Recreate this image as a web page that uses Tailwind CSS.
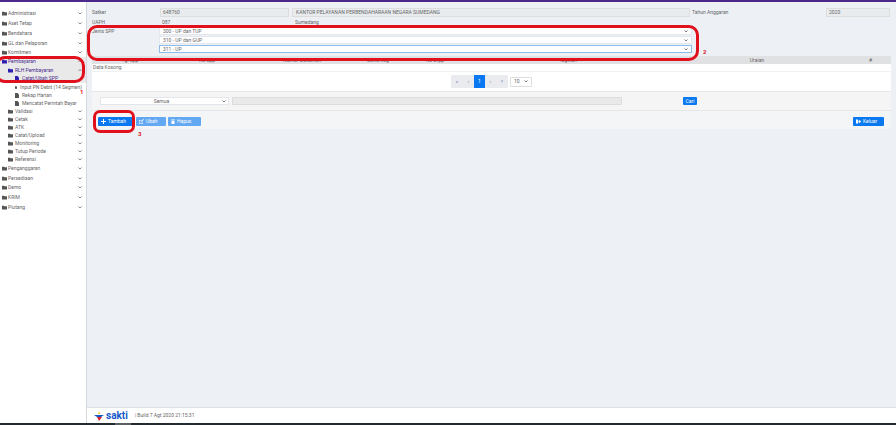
<!DOCTYPE html>
<html lang="id">
<head>
  <meta charset="UTF-8" />
  <title>SAKTI</title>
  <script src="https://cdn.jsdelivr.net/npm/@tailwindcss/browser@4"></script>
</head>
<body class="h-[425px] w-[896px] overflow-hidden bg-[#edf1f6] font-['Roboto',sans-serif] text-[5px] leading-none text-[#666]">
  <div class="relative flex h-[425px] flex-col">
    <div class="h-[2px] bg-[#4b2a8c]"></div>

    <div class="flex min-h-0 flex-1">
      <!-- Sidebar -->
      <aside class="flex w-[87px] shrink-0 flex-col whitespace-nowrap border-r border-[#d5d8dc] bg-white pt-[6px]">
        <div class="flex h-[10px] items-center pl-[2px] pr-[4px]"><svg class="mr-[1px] h-[5px] w-[5px] fill-[#555]" viewBox="0 0 12 10"><path d="M0 1h5l1 1h6v8H0z"/></svg><span class="flex-1">Administrasi</span><svg class="h-[3px] w-[4px] stroke-[#666]" viewBox="0 0 8 6" fill="none" stroke-width="1.5"><path d="M1 1l3 3 3-3"/></svg></div>
        <div class="flex h-[10px] items-center pl-[2px] pr-[4px]"><svg class="mr-[1px] h-[5px] w-[5px] fill-[#555]" viewBox="0 0 12 10"><path d="M0 1h5l1 1h6v8H0z"/></svg><span class="flex-1">Aset Tetap</span><svg class="h-[3px] w-[4px] stroke-[#666]" viewBox="0 0 8 6" fill="none" stroke-width="1.5"><path d="M1 1l3 3 3-3"/></svg></div>
        <div class="flex h-[10px] items-center pl-[2px] pr-[4px]"><svg class="mr-[1px] h-[5px] w-[5px] fill-[#555]" viewBox="0 0 12 10"><path d="M0 1h5l1 1h6v8H0z"/></svg><span class="flex-1">Bendahara</span><svg class="h-[3px] w-[4px] stroke-[#666]" viewBox="0 0 8 6" fill="none" stroke-width="1.5"><path d="M1 1l3 3 3-3"/></svg></div>
        <div class="flex h-[10px] items-center pl-[2px] pr-[4px]"><svg class="mr-[1px] h-[5px] w-[5px] fill-[#555]" viewBox="0 0 12 10"><path d="M0 1h5l1 1h6v8H0z"/></svg><span class="flex-1">GL dan Pelaporan</span><svg class="h-[3px] w-[4px] stroke-[#666]" viewBox="0 0 8 6" fill="none" stroke-width="1.5"><path d="M1 1l3 3 3-3"/></svg></div>
        <div class="flex h-[9px] items-center pl-[2px] pr-[4px]"><svg class="mr-[1px] h-[5px] w-[5px] fill-[#555]" viewBox="0 0 12 10"><path d="M0 1h5l1 1h6v8H0z"/></svg><span class="flex-1">Komitmen</span><svg class="h-[3px] w-[4px] stroke-[#666]" viewBox="0 0 8 6" fill="none" stroke-width="1.5"><path d="M1 1l3 3 3-3"/></svg></div>

        <div class="bg-[#e9e9e9] pb-[1px]">
          <div class="flex h-[9px] items-center pl-[2px] pr-[4px] text-[#4b2a8c]"><svg class="mr-[1px] h-[5px] w-[5px] fill-[#2f1fb0]" viewBox="0 0 12 10"><path d="M0 1h5l1 1h6v8H0z"/></svg><span class="flex-1">Pembayaran</span><svg class="h-[3px] w-[4px] stroke-[#666]" viewBox="0 0 8 6" fill="none" stroke-width="1.5"><path d="M1 4l3-3 3 3"/></svg></div>
          <div class="flex h-[8px] items-center pl-[8px] pr-[4px] text-[#4b2a8c]"><svg class="mr-[2px] h-[5px] w-[5px] fill-[#2f1fb0]" viewBox="0 0 12 10"><path d="M0 1h5l1 1h6v8H0z"/></svg><span class="flex-1">RLH Pembayaran</span><svg class="h-[3px] w-[4px] stroke-[#666]" viewBox="0 0 8 6" fill="none" stroke-width="1.5"><path d="M1 4l3-3 3 3"/></svg></div>
          <div class="flex h-[8px] items-center pl-[15px] pr-[4px] text-[#4b2a8c]"><svg class="mr-[3px] h-[5px] w-[4px] fill-[#2f1fb0]" viewBox="0 0 8 10"><path d="M0 0h5l3 3v7H0z"/></svg><span>Catat/Ubah SPP</span></div>
        </div>

        <div class="flex h-[8px] items-center pl-[15px] pr-[4px]"><svg class="mr-[3px] h-[5px] w-[4px] fill-[#555]" viewBox="0 0 8 10"><path d="M0 0h5l3 3v7H0z"/></svg><span>Input PN Debit (14 Segmen)</span></div>
        <div class="flex h-[8px] items-center pl-[15px] pr-[4px]"><svg class="mr-[3px] h-[5px] w-[4px] fill-[#555]" viewBox="0 0 8 10"><path d="M0 0h5l3 3v7H0z"/></svg><span>Rekap Harian</span></div>
        <div class="flex h-[8px] items-center pl-[15px] pr-[4px]"><svg class="mr-[3px] h-[5px] w-[4px] fill-[#555]" viewBox="0 0 8 10"><path d="M0 0h5l3 3v7H0z"/></svg><span>Mencatat Perintah Bayar</span></div>

        <div class="flex h-[8px] items-center pl-[8px] pr-[4px]"><svg class="mr-[2px] h-[5px] w-[5px] fill-[#555]" viewBox="0 0 12 10"><path d="M0 1h5l1 1h6v8H0z"/></svg><span class="flex-1">Validasi</span><svg class="h-[3px] w-[4px] stroke-[#666]" viewBox="0 0 8 6" fill="none" stroke-width="1.5"><path d="M1 1l3 3 3-3"/></svg></div>
        <div class="flex h-[8px] items-center pl-[8px] pr-[4px]"><svg class="mr-[2px] h-[5px] w-[5px] fill-[#555]" viewBox="0 0 12 10"><path d="M0 1h5l1 1h6v8H0z"/></svg><span class="flex-1">Cetak</span><svg class="h-[3px] w-[4px] stroke-[#666]" viewBox="0 0 8 6" fill="none" stroke-width="1.5"><path d="M1 1l3 3 3-3"/></svg></div>
        <div class="flex h-[8px] items-center pl-[8px] pr-[4px]"><svg class="mr-[2px] h-[5px] w-[5px] fill-[#555]" viewBox="0 0 12 10"><path d="M0 1h5l1 1h6v8H0z"/></svg><span class="flex-1">ATK</span><svg class="h-[3px] w-[4px] stroke-[#666]" viewBox="0 0 8 6" fill="none" stroke-width="1.5"><path d="M1 1l3 3 3-3"/></svg></div>
        <div class="flex h-[8px] items-center pl-[8px] pr-[4px]"><svg class="mr-[2px] h-[5px] w-[5px] fill-[#555]" viewBox="0 0 12 10"><path d="M0 1h5l1 1h6v8H0z"/></svg><span class="flex-1">Catat/Upload</span><svg class="h-[3px] w-[4px] stroke-[#666]" viewBox="0 0 8 6" fill="none" stroke-width="1.5"><path d="M1 1l3 3 3-3"/></svg></div>
        <div class="flex h-[8px] items-center pl-[8px] pr-[4px]"><svg class="mr-[2px] h-[5px] w-[5px] fill-[#555]" viewBox="0 0 12 10"><path d="M0 1h5l1 1h6v8H0z"/></svg><span class="flex-1">Monitoring</span><svg class="h-[3px] w-[4px] stroke-[#666]" viewBox="0 0 8 6" fill="none" stroke-width="1.5"><path d="M1 1l3 3 3-3"/></svg></div>
        <div class="flex h-[8px] items-center pl-[8px] pr-[4px]"><svg class="mr-[2px] h-[5px] w-[5px] fill-[#555]" viewBox="0 0 12 10"><path d="M0 1h5l1 1h6v8H0z"/></svg><span class="flex-1">Tutup Periode</span><svg class="h-[3px] w-[4px] stroke-[#666]" viewBox="0 0 8 6" fill="none" stroke-width="1.5"><path d="M1 1l3 3 3-3"/></svg></div>
        <div class="flex h-[8px] items-center pl-[8px] pr-[4px]"><svg class="mr-[2px] h-[5px] w-[5px] fill-[#555]" viewBox="0 0 12 10"><path d="M0 1h5l1 1h6v8H0z"/></svg><span class="flex-1">Referensi</span><svg class="h-[3px] w-[4px] stroke-[#666]" viewBox="0 0 8 6" fill="none" stroke-width="1.5"><path d="M1 1l3 3 3-3"/></svg></div>

        <div class="flex h-[10px] items-center pl-[2px] pr-[4px]"><svg class="mr-[1px] h-[5px] w-[5px] fill-[#555]" viewBox="0 0 12 10"><path d="M0 1h5l1 1h6v8H0z"/></svg><span class="flex-1">Penganggaran</span><svg class="h-[3px] w-[4px] stroke-[#666]" viewBox="0 0 8 6" fill="none" stroke-width="1.5"><path d="M1 1l3 3 3-3"/></svg></div>
        <div class="flex h-[10px] items-center pl-[2px] pr-[4px]"><svg class="mr-[1px] h-[5px] w-[5px] fill-[#555]" viewBox="0 0 12 10"><path d="M0 1h5l1 1h6v8H0z"/></svg><span class="flex-1">Persediaan</span><svg class="h-[3px] w-[4px] stroke-[#666]" viewBox="0 0 8 6" fill="none" stroke-width="1.5"><path d="M1 1l3 3 3-3"/></svg></div>
        <div class="flex h-[9px] items-center pl-[2px] pr-[4px]"><svg class="mr-[1px] h-[5px] w-[5px] fill-[#555]" viewBox="0 0 12 10"><path d="M0 1h5l1 1h6v8H0z"/></svg><span class="flex-1">Demo</span><svg class="h-[3px] w-[4px] stroke-[#666]" viewBox="0 0 8 6" fill="none" stroke-width="1.5"><path d="M1 1l3 3 3-3"/></svg></div>
        <div class="flex h-[10px] items-center pl-[2px] pr-[4px]"><svg class="mr-[1px] h-[5px] w-[5px] fill-[#555]" viewBox="0 0 12 10"><path d="M0 1h5l1 1h6v8H0z"/></svg><span class="flex-1">KRIM</span><svg class="h-[3px] w-[4px] stroke-[#666]" viewBox="0 0 8 6" fill="none" stroke-width="1.5"><path d="M1 1l3 3 3-3"/></svg></div>
        <div class="flex h-[10px] items-center pl-[2px] pr-[4px]"><svg class="mr-[1px] h-[5px] w-[5px] fill-[#555]" viewBox="0 0 12 10"><path d="M0 1h5l1 1h6v8H0z"/></svg><span class="flex-1">Piutang</span><svg class="h-[3px] w-[4px] stroke-[#666]" viewBox="0 0 8 6" fill="none" stroke-width="1.5"><path d="M1 1l3 3 3-3"/></svg></div>
      </aside>

      <!-- Main -->
      <div class="flex min-w-0 flex-1 flex-col">
        <main class="flex-1 pl-[5px] pr-[5px] pt-[5px]">
          <!-- Form -->
          <div class="flex h-[10px] items-center">
            <span class="w-[68px]">Satker</span>
            <div class="flex h-[9px] w-[129px] items-center border border-[#ddd] bg-[#e9ecef] pl-[2px]">648760</div>
            <div class="ml-[3px] flex h-[9px] w-[398px] items-center border border-[#ddd] bg-[#e9ecef] pl-[3px]">KANTOR PELAYANAN PERBENDAHARAAN NEGARA SUMEDANG</div>
            <span class="ml-[2px] w-[134px]">Tahun Anggaran</span>
            <div class="flex h-[9px] w-[64px] items-center border border-[#ddd] bg-[#e9ecef] pl-[2px]">2020</div>
          </div>
          <div class="flex h-[10px] items-center">
            <span class="w-[68px]">UAPH</span>
            <span class="w-[132px] pl-[2px]">087</span>
            <span class="pl-[3px]">Sumedang</span>
          </div>
          <div class="flex">
            <span class="w-[67px] pt-[2px]">Jenis SPP</span>
            <div class="flex w-[533px] flex-col gap-[1px]">
              <div class="flex h-[8px] items-center justify-between border border-[#e3e6ea] bg-white pl-[3px] pr-[3px]"><span>300 - UP dan TUP</span><svg class="h-[3px] w-[4px] stroke-[#555]" viewBox="0 0 8 6" fill="none" stroke-width="1.5"><path d="M1 1l3 3 3-3"/></svg></div>
              <div class="flex h-[8px] items-center justify-between border border-[#e3e6ea] bg-white pl-[3px] pr-[3px]"><span>310 - UP dan GUP</span><svg class="h-[3px] w-[4px] stroke-[#555]" viewBox="0 0 8 6" fill="none" stroke-width="1.5"><path d="M1 1l3 3 3-3"/></svg></div>
              <div class="flex h-[8px] items-center justify-between border border-[#8fbbe8] bg-white pl-[3px] pr-[3px]"><span>311 - UP</span><svg class="h-[3px] w-[4px] stroke-[#555]" viewBox="0 0 8 6" fill="none" stroke-width="1.5"><path d="M1 1l3 3 3-3"/></svg></div>
            </div>
          </div>

          <!-- Table -->
          <div class="mt-[3px]">
            <div class="grid h-[8px] grid-cols-[76px_78px_112px_40px_74px_192px_186px_1fr] items-center bg-[#dfe1e3] text-center">
              <span>Tgl Spp</span><span>No Spp</span><span>Nomor Dokumen</span><span>Jenis Keg</span><span>No Drpp</span><span>Tagihan</span><span>Uraian</span><span>#</span>
            </div>
            <div class="flex h-[8px] items-center border-b border-[#eef0f3] bg-white pl-[1px]">Data Kosong</div>
            <div class="flex h-[20px] items-center justify-center border-b border-[#e4e6e8] bg-white">
              <div class="flex h-[13px] items-stretch rounded-[1px] bg-[#e9ebee] text-[#6c7fa8]">
                <span class="flex w-[12px] items-center justify-center">«</span>
                <span class="flex w-[11px] items-center justify-center">‹</span>
                <span class="flex w-[11px] items-center justify-center bg-[#0a78f0] text-white">1</span>
                <span class="flex w-[11px] items-center justify-center">›</span>
                <span class="flex w-[12px] items-center justify-center">»</span>
              </div>
              <div class="ml-[2px] flex h-[10px] w-[22px] items-center justify-between rounded-[1px] border border-[#ddd] bg-white px-[3px]"><span>10</span><svg class="h-[3px] w-[4px] stroke-[#555]" viewBox="0 0 8 6" fill="none" stroke-width="1.5"><path d="M1 1l3 3 3-3"/></svg></div>
            </div>
            <div class="flex h-[19px] items-center border-b border-[#e4e6e8] bg-[#f5f5f5] pl-[8px]">
              <div class="flex h-[8px] w-[129px] items-center justify-center border border-[#e3e6ea] bg-white"><span class="flex-1 text-center">Semua</span><svg class="mr-[2px] h-[3px] w-[4px] stroke-[#555]" viewBox="0 0 8 6" fill="none" stroke-width="1.5"><path d="M1 1l3 3 3-3"/></svg></div>
              <div class="ml-[3px] h-[8px] w-[390px] border border-[#ddd] bg-[#e9e9e9]"></div>
              <span class="ml-[61px] flex h-[8px] w-[14px] items-center justify-center rounded-[1px] bg-[#0a78f0] text-white">Cari</span>
            </div>
            <div class="flex h-[18px] items-center justify-between bg-[#f4f5f6] pl-[6px] pr-[7px] pt-[3px]">
              <div class="flex gap-[2px]">
                <span class="flex h-[9px] w-[36px] items-center rounded-[1px] bg-[#0a78f0] pl-[3px] text-white"><svg class="mr-[2px] h-[5px] w-[5px] fill-white" viewBox="0 0 10 10"><path d="M4 0h2v4h4v2H6v4H4V6H0V4h4z"/></svg>Tambah</span>
                <span class="flex h-[9px] w-[30px] items-center rounded-[1px] bg-[#62a8f3] pl-[3px] text-white"><svg class="mr-[2px] h-[5px] w-[5px] fill-white" viewBox="0 0 10 10"><path d="M0 2h5v1H1v6h6V6h1v4H0zM4 5l5-5 1 1-5 5H4z"/></svg>Ubah</span>
                <span class="flex h-[9px] w-[33px] items-center rounded-[1px] bg-[#62a8f3] pl-[3px] text-white"><svg class="mr-[2px] h-[5px] w-[4px] fill-white" viewBox="0 0 8 10"><path d="M0 1h8v1H0zM1 3h6v7H1z"/></svg>Hapus</span>
              </div>
              <span class="flex h-[9px] w-[31px] items-center rounded-[1px] bg-[#0a78f0] pl-[3px] text-white"><svg class="mr-[2px] h-[5px] w-[5px] fill-white" viewBox="0 0 10 10"><path d="M0 1h4v8H0zM5 3h2V1l3 4-3 4V7H5z"/></svg>Keluar</span>
            </div>
          </div>
        </main>

        <footer class="flex h-[16px] items-center border-t border-[#dde0e4] bg-white pl-[7px]">
          <svg class="h-[10px] w-[10px]" viewBox="0 0 10 10"><path d="M5 0l1 3H4z" fill="#f2c21b"/><path d="M0 4h10L7 6H3z" fill="#1559c9"/><path d="M3 6h5L5 10z" fill="#d8232a"/></svg>
          <span class="ml-[2px] text-[10px] font-bold text-[#1559c9]">sakti</span>
          <span class="ml-[7px]">| Build 7 Agt 2020 21:15:31</span>
        </footer>
      </div>
    </div>

    <div class="flex h-[2px] bg-[#232b31]">
      <div class="ml-[115px] w-[16px] bg-[#5c6063]"></div>
    </div>

    <!-- Red annotations over the screenshot -->
    <div class="absolute left-[-5px] top-[56px] h-[27px] w-[90px] rounded-[10px] border-[3px] border-[#e0101c]"></div>
    <div class="absolute left-[87px] top-[25px] h-[36px] w-[612px] rounded-[10px] border-[3px] border-[#e0101c]"></div>
    <div class="absolute left-[93px] top-[110px] h-[23px] w-[42px] rounded-[7px] border-[3px] border-[#e0101c]"></div>
    <span class="absolute left-[80px] top-[89px] text-[6px] font-bold text-[#e0101c]">1</span>
    <span class="absolute left-[703px] top-[49px] text-[6px] font-bold text-[#e0101c]">2</span>
    <span class="absolute left-[138px] top-[131px] text-[6px] font-bold text-[#e0101c]">3</span>
  </div>
</body>
</html>
